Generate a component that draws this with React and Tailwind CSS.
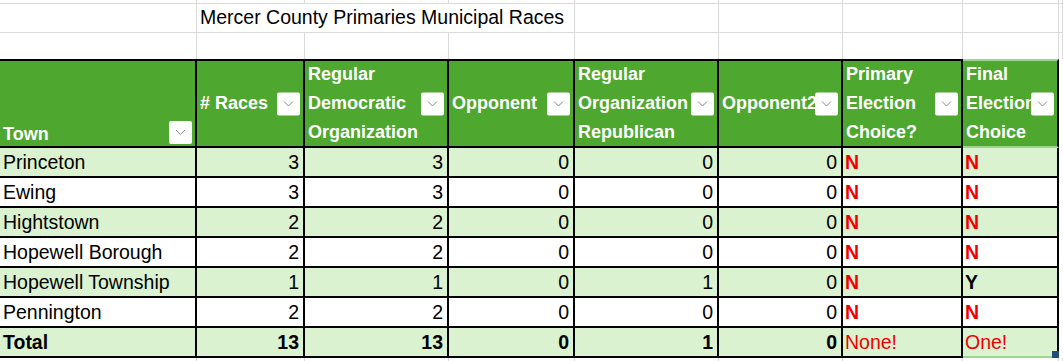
import React from 'react';

// column widths match the sheet's column borders
const grid = 'grid grid-cols-[197px_108px_144px_126px_144px_124px_120px_96px_1fr]';

const rows = [
  { town: 'Princeton', races: 3, dem: 3, opp: 0, rep: 0, opp2: 0, primary: 'N', final: 'N' },
  { town: 'Ewing', races: 3, dem: 3, opp: 0, rep: 0, opp2: 0, primary: 'N', final: 'N' },
  { town: 'Hightstown', races: 2, dem: 2, opp: 0, rep: 0, opp2: 0, primary: 'N', final: 'N' },
  { town: 'Hopewell Borough', races: 2, dem: 2, opp: 0, rep: 0, opp2: 0, primary: 'N', final: 'N' },
  { town: 'Hopewell Township', races: 1, dem: 1, opp: 0, rep: 1, opp2: 0, primary: 'N', final: 'Y' },
  { town: 'Pennington', races: 2, dem: 2, opp: 0, rep: 0, opp2: 0, primary: 'N', final: 'N' },
];

function FilterButton({ bottom }) {
  return (
    <span
      className={
        'absolute right-[3px] flex h-[23px] w-[23px] items-center justify-center rounded-[2px] bg-white ' +
        (bottom ? 'bottom-[2px]' : 'top-1/2 -translate-y-1/2')
      }
    >
      <svg width="11" height="7" viewBox="0 0 11 7" fill="none">
        <path d="M1 1l4.5 4.5L10 1" stroke="#8a8a8a" strokeWidth="1" />
      </svg>
    </span>
  );
}

function HeadCell({ lines, bottom, last }) {
  return (
    <div
      className={
        'relative flex h-[89px] overflow-hidden border-y-2 border-r-2 bg-[#4ea72e] px-[3px] ' +
        (bottom ? 'items-end ' : 'items-center ') +
        (last ? 'border-t-[#9ad88a] border-b-[#9ad88a] border-r-black' : 'border-black')
      }
    >
      <div
        className={
          'whitespace-nowrap text-[18px] font-bold text-white ' +
          (bottom ? 'leading-[24px]' : 'leading-[29px]')
        }
      >
        {lines.map((l) => (
          <div key={l}>{l}</div>
        ))}
      </div>
      <FilterButton bottom={bottom} />
    </div>
  );
}

function GridRow({ h, last }) {
  return (
    <>
      {Array.from({ length: 9 }).map((_, i) => (
        <div
          key={i}
          className={'border-r border-[#dadada] ' + (last ? '' : 'border-b ') + h}
        />
      ))}
    </>
  );
}

export default function App() {
  return (
    <div className="h-[361px] w-[1063px] overflow-hidden bg-white font-['Liberation_Sans',Arial,sans-serif] text-black">
      <div className={grid}>
        <GridRow h="h-[4px]" />

        <div className="h-[29px] border-b border-r border-[#dadada]" />
        <div className="col-span-3 flex h-[29px] items-center whitespace-nowrap border-b border-r border-[#dadada] pl-[3px] text-[19.5px]">
          Mercer County Primaries Municipal Races
        </div>
        {Array.from({ length: 5 }).map((_, i) => (
          <div key={i} className="h-[29px] border-b border-r border-[#dadada]" />
        ))}

        <GridRow h="h-[26px]" last />

        <HeadCell lines={['Town']} bottom />
        <HeadCell lines={['# Races']} />
        <HeadCell lines={['Regular', 'Democratic', 'Organization']} />
        <HeadCell lines={['Opponent']} />
        <HeadCell lines={['Regular', 'Organization', 'Republican']} />
        <HeadCell lines={['Opponent2']} />
        <HeadCell lines={['Primary', 'Election', 'Choice?']} />
        <HeadCell lines={['Final', 'Election', 'Choice']} last />
        <div />

        {rows.map((r, i) => {
          const bg = i % 2 === 0 ? 'bg-[#daf2d0]' : 'bg-white';
          const cell = 'h-[30px] border-b-2 border-r-2 border-black text-[19.5px] leading-[29px] ' + bg;
          const num = cell + ' pr-[4px] text-right';
          return (
            <React.Fragment key={r.town}>
              <div className={cell + ' whitespace-nowrap pl-[3px]'}>{r.town}</div>
              <div className={num}>{r.races}</div>
              <div className={num}>{r.dem}</div>
              <div className={num}>{r.opp}</div>
              <div className={num}>{r.rep}</div>
              <div className={num}>{r.opp2}</div>
              <div className={cell + ' pl-[2px] font-bold text-[#ee0000]'}>{r.primary}</div>
              <div
                className={
                  cell + ' pl-[2px] font-bold ' + (r.final === 'N' ? 'text-[#ee0000]' : 'text-black')
                }
              >
                {r.final}
              </div>
              <div />
            </React.Fragment>
          );
        })}

        <div className="h-[30px] border-b-2 border-r-2 border-black bg-[#daf2d0] pl-[3px] text-[19.5px] font-bold leading-[29px]">
          Total
        </div>
        {[13, 13, 0, 1, 0].map((n, i) => (
          <div
            key={i}
            className="h-[30px] border-b-2 border-r-2 border-black bg-[#daf2d0] pr-[4px] text-right text-[19.5px] font-bold leading-[29px]"
          >
            {n}
          </div>
        ))}
        <div className="h-[30px] border-b-2 border-r-2 border-black bg-[#daf2d0] pl-[2px] text-[19.5px] leading-[29px] text-[#ee0000]">
          None!
        </div>
        <div className="relative h-[30px] border-b-2 border-r-2 border-b-[#9ad88a] border-r-black bg-[#daf2d0] pl-[2px] text-[19.5px] leading-[29px] text-[#ee0000]">
          One!
          <span className="absolute -bottom-[2px] -right-[2px] h-[7px] w-[7px] bg-[#1f4e79]" />
        </div>
        <div />

        <GridRow h="h-[6px]" last />
      </div>
    </div>
  );
}
